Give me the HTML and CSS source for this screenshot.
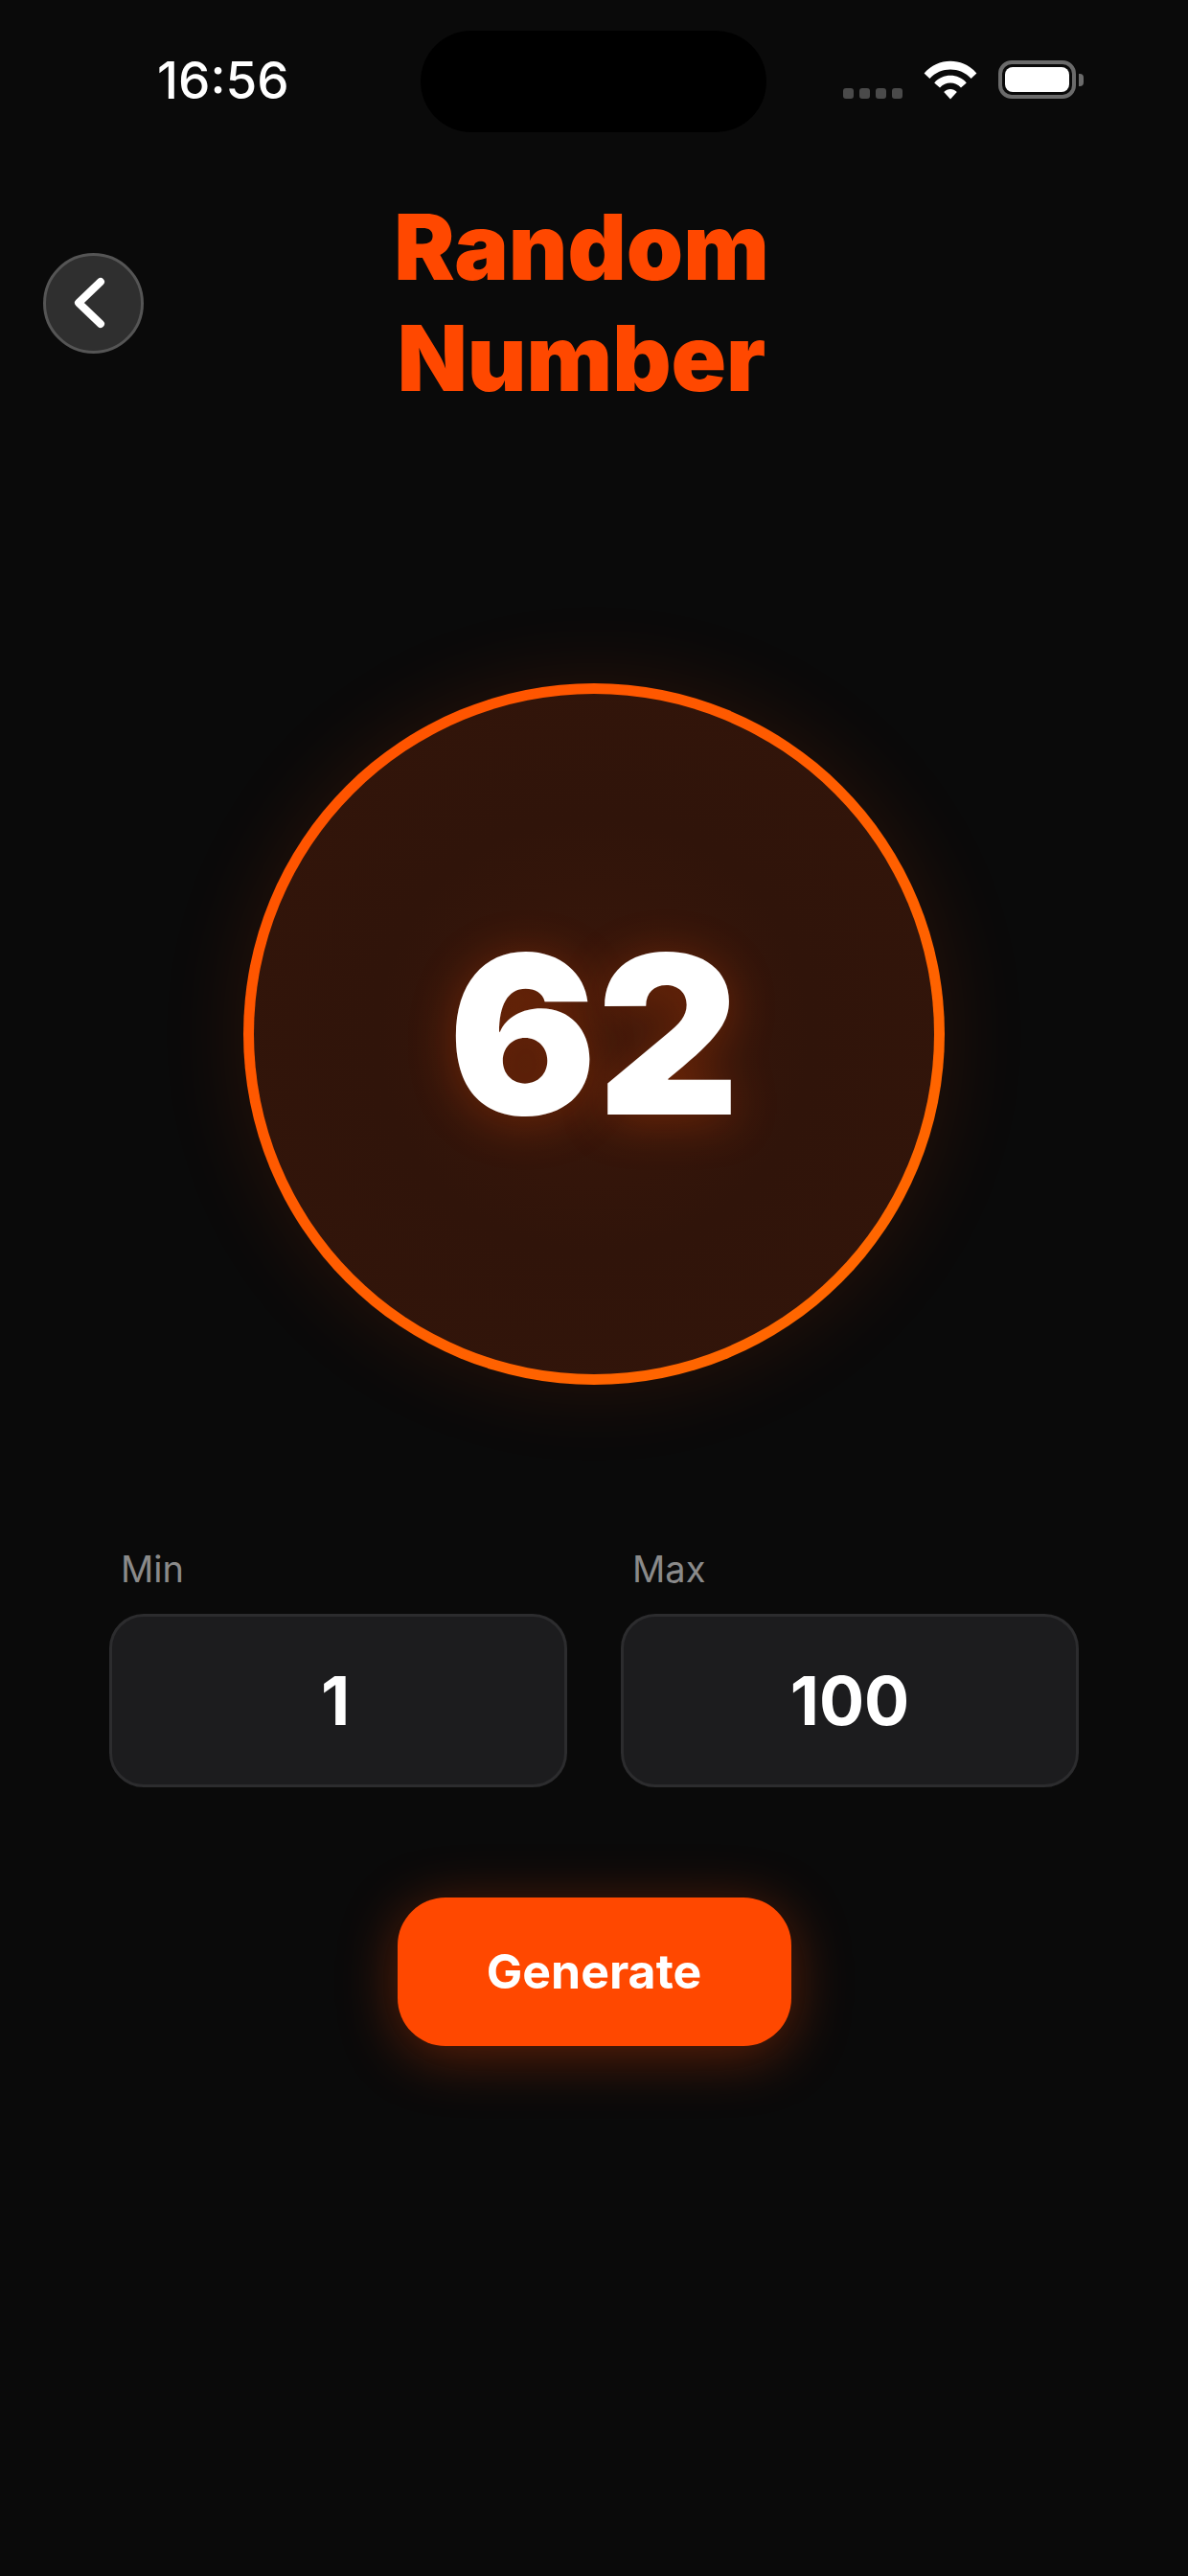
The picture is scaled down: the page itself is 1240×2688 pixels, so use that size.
FILE: index.html
```html
<!DOCTYPE html>
<html lang="en">
<head>
    <meta charset="UTF-8">
    <meta name="viewport" content="width=device-width, initial-scale=1.0">
    <title>Random Number</title>
    <link rel="stylesheet" href="styles.css">
</head>
<body>
    <div class="status-bar">
        <div class="time">16:56</div>
        <div class="island"></div>
        <div class="status-icons">
            <div class="signal"><span></span><span></span><span></span><span></span></div>
            <svg class="wifi" width="56" height="41" viewBox="0 0 56 41">
                <path d="M0.6 13.4 C15 -3.6 41 -3.6 55.4 13.4 L49.6 19 C38 6.4 18 6.4 6.4 19 Z" fill="#fff"/>
                <path d="M11.2 23.4 C20 13.2 36 13.2 44.8 23.4 L39 28.6 C33 21.8 23 21.8 17 28.6 Z" fill="#fff"/>
                <path d="M21.2 33 C25 29 31 29 34.8 33 L28 40.6 Z" fill="#fff"/>
            </svg>
            <div class="battery"><div class="battery-level"></div></div>
            <div class="battery-cap"></div>
        </div>
    </div>

    <header class="top-bar">
        <button class="back-btn" type="button">
            <svg width="40" height="60" viewBox="0 0 40 60">
                <path d="M31 8 L8 30 L31 52" fill="none" stroke="#fff" stroke-width="8" stroke-linecap="round" stroke-linejoin="round"/>
            </svg>
        </button>
        <h1>Random<br>Number</h1>
    </header>

    <main>
        <div class="result-circle"><span class="result">62</span></div>

        <div class="range">
            <div class="field">
                <label>Min</label>
                <div class="field-box"><span class="min-value">1</span></div>
            </div>
            <div class="field">
                <label>Max</label>
                <div class="field-box">100</div>
            </div>
        </div>

        <button class="btn" type="button">Generate</button>
    </main>
</body>
</html>
```

FILE: styles.css
```css
*{
    margin: 0;
    padding: 0;
    box-sizing: border-box;
    font-family: Inter, "Liberation Sans", sans-serif;
}
body {
    width: 1240px;
    height: 2688px;
    background: #0a0a0a;
    color: #fff;
    overflow: hidden;
}
.status-bar {
    display: flex;
    align-items: flex-start;
    height: 138px;
    padding-top: 32px;
}
.time {
    width: 439px;
    padding: 27px 0 0 164px;
    font-size: 53px;
    line-height: 50px;
    font-weight: 500;
}
.island {
    width: 361px;
    height: 106px;
    border-radius: 53px;
    background: #000;
}
.status-icons {
    display: flex;
    align-items: flex-start;
    padding: 31px 0 0 80px;
}
.signal {
    display: flex;
    gap: 6px;
    margin: 29px 22px 0 0;
}
.signal span {
    width: 11px;
    height: 11px;
    border-radius: 3px;
    background: #4a4a4a;
}
.battery {
    width: 81px;
    height: 40px;
    margin-left: 22px;
    padding: 3px;
    border: 4px solid #6b6b6b;
    border-radius: 14px;
}
.battery-level {
    height: 100%;
    background: #fff;
    border-radius: 8px;
}
.battery-cap {
    width: 5px;
    height: 13px;
    margin: 14px 0 0 3px;
    background: #6b6b6b;
    border-radius: 0 4px 4px 0;
}
.top-bar {
    display: flex;
    align-items: center;
    padding: 62px 176px 0 45px;
}
.back-btn {
    flex: none;
    display: flex;
    justify-content: center;
    align-items: center;
    width: 105px;
    height: 105px;
    border-radius: 50%;
    background: #2f2f2f;
    border: 3px solid #555;
}
.back-btn svg {
    margin-left: -8px;
}
h1 {
    flex: 1;
    text-align: center;
    font-size: 95px;
    line-height: 116px;
    font-weight: 900;
    color: #ff4800;
}
main {
    display: flex;
    flex-direction: column;
    align-items: center;
}
.result-circle {
    display: flex;
    justify-content: center;
    align-items: center;
    width: 732px;
    height: 732px;
    margin-top: 281px;
    border-radius: 50%;
    border: 11px solid transparent;
    background:
        radial-gradient(circle, #3a170a 0, #30140a 45%, #33150a 100%) padding-box,
        linear-gradient(135deg, #ff5000, #ff6a00) border-box;
    box-shadow: 0 0 90px rgba(255, 80, 0, 0.13);
}
.result {
    font-size: 230px;
    line-height: 1;
    font-weight: 900;
    text-shadow: 0 6px 50px rgba(255, 80, 0, 0.3);
}
.range {
    display: flex;
    gap: 56px;
    margin-top: 169px;
}
.field label {
    display: block;
    padding-left: 12px;
    margin-bottom: 24px;
    font-size: 38px;
    line-height: 46px;
    color: #8a8a8a;
}
.field-box {
    display: flex;
    justify-content: center;
    align-items: center;
    width: 478px;
    height: 181px;
    border-radius: 36px;
    background: #1c1c1e;
    border: 3px solid #2c2c2e;
    font-size: 70px;
    font-weight: 700;
}
.min-value {
    margin-left: -6px;
}
.btn {
    width: 411px;
    height: 155px;
    margin-top: 115px;
    padding-bottom: 2px;
    border: none;
    border-radius: 50px;
    background: #ff4800;
    color: #fff;
    font-size: 50px;
    font-weight: 700;
    box-shadow: 0 10px 60px rgba(255, 72, 0, 0.35);
}
```
